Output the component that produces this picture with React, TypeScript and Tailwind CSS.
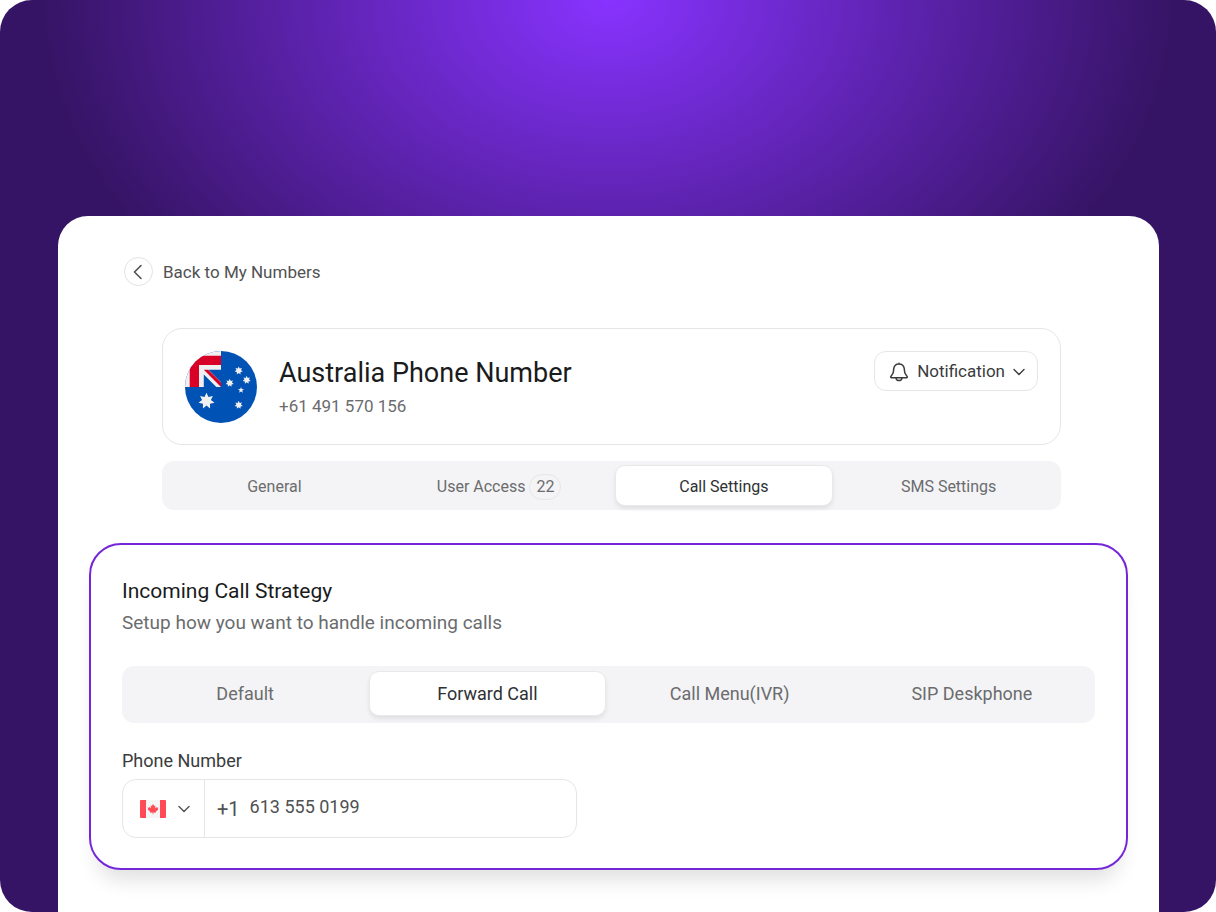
import { useState } from "react"
import clsx from "clsx"

type Tab = { id: string; label: string; count?: number }

const pageTabs: Tab[] = [
  { id: "general", label: "General" },
  { id: "access", label: "User Access", count: 22 },
  { id: "calls", label: "Call Settings" },
  { id: "sms", label: "SMS Settings" },
]

const strategies: Tab[] = [
  { id: "default", label: "Default" },
  { id: "forward", label: "Forward Call" },
  { id: "ivr", label: "Call Menu(IVR)" },
  { id: "sip", label: "SIP Deskphone" },
]

function starPoints(cx: number, cy: number, r: number, tips: number) {
  const inner = tips === 5 ? 0.42 : 0.55
  return Array.from({ length: tips * 2 }, (_, i) => {
    const radius = i % 2 ? r * inner : r
    const angle = (Math.PI * i) / tips - Math.PI / 2
    return `${(cx + radius * Math.cos(angle)).toFixed(2)},${(cy + radius * Math.sin(angle)).toFixed(2)}`
  }).join(" ")
}

function AustraliaFlag() {
  return (
    <svg viewBox="0 0 72 72" className="size-[72px] shrink-0" role="img" aria-label="Australia">
      <clipPath id="au-clip">
        <circle cx="36" cy="36" r="36" />
      </clipPath>
      <g clipPath="url(#au-clip)">
        <path d="M0 0h72v72H0z" fill="#0052b4" />
        <path d="M0 0h36v36H0z" fill="#f0f0f0" />
        <path d="M4.7 4.7H36V14H14v22H4.7z" fill="#d80027" />
        <path d="M23.5 18.8H36V31.3zM18.8 23.5v12.5h12.5z" fill="#0052b4" />
        <path d="M18.8 18.8h4.4L36 31.6V36z" fill="#d80027" />
        <g fill="#f0f0f0">
          <polygon points={starPoints(21.5, 50, 8.2, 7)} />
          <polygon points={starPoints(53.7, 54, 4.2, 7)} />
          <polygon points={starPoints(44.7, 32, 4.2, 7)} />
          <polygon points={starPoints(53.7, 19.6, 4.2, 7)} />
          <polygon points={starPoints(61.7, 29, 4.2, 7)} />
          <polygon points={starPoints(56, 39.2, 3.2, 5)} />
        </g>
      </g>
    </svg>
  )
}

function CanadaFlag() {
  return (
    <svg viewBox="0 0 26 18" className="h-[18px] w-[26px]" aria-hidden="true">
      <rect width="26" height="18" rx="1" fill="#f5f5f5" />
      <path d="M1 0h5v18H1a1 1 0 0 1-1-1V1a1 1 0 0 1 1-1zM20 0h5a1 1 0 0 1 1 1v16a1 1 0 0 1-1 1h-5z" fill="#ff4b55" />
      <path
        d="M13 4l1.2 2.1 1.2-.5-.4 2.6 1.5-1.3.4.8 1.5-.2-.6 1.5.6.6-2.7 2.2.2 1-2.6-.4.1 1.9h-.8l.1-1.9-2.6.4.2-1-2.7-2.2.6-.6-.6-1.5 1.5.2.4-.8 1.5 1.3-.4-2.6 1.2.5z"
        fill="#ff4b55"
      />
    </svg>
  )
}

function ChevronDown() {
  return (
    <svg viewBox="0 0 12 12" className="size-3" fill="none" stroke="currentColor" strokeWidth="1.4" strokeLinecap="round" strokeLinejoin="round" aria-hidden="true">
      <path d="M1 3.5l5 5 5-5" />
    </svg>
  )
}

function BellIcon() {
  return (
    <svg viewBox="0 0 20 20" className="size-5" fill="none" stroke="currentColor" strokeWidth="1.5" strokeLinecap="round" strokeLinejoin="round" aria-hidden="true">
      <path d="M10 1.2v.8M10 2C7.2 2 5 4.1 4.7 6.9l-.3 2.7c-.1.8-.4 1.5-.8 2.2L1.8 14.6c-.3.6 0 1.2.7 1.2h15c.7 0 1-.6.7-1.2l-1.8-2.8c-.4-.7-.7-1.4-.8-2.2l-.3-2.7C15 4.1 12.8 2 10 2z" />
      <path d="M7.1 16.1c.2 1.6 1.3 2.5 2.9 2.5s2.7-.9 2.9-2.5" />
    </svg>
  )
}

function TabBar({ tabs, initial, label, large }: { tabs: Tab[]; initial: string; label: string; large?: boolean }) {
  const [active, setActive] = useState(initial)

  return (
    <div
      role="tablist"
      aria-label={label}
      className={clsx("grid grid-cols-4 gap-1.5 rounded-xl bg-[#f4f4f6]", large ? "px-[5px] pt-[5px] pb-[7px]" : "px-[3px] py-1")}
    >
      {tabs.map((tab) => (
        <button
          key={tab.id}
          type="button"
          role="tab"
          aria-selected={tab.id === active}
          onClick={() => setActive(tab.id)}
          className={clsx(
            "flex cursor-pointer items-center justify-center gap-1 rounded-[10px] border",
            large ? "h-[45px] text-lg" : "h-[41px] pt-0.5 text-base",
            tab.id === active
              ? "border-[#e9e9eb] bg-white text-[#2f3133] shadow-[0_3px_4px_rgba(0,0,0,0.08)]"
              : "border-transparent text-[#6b6c6e]",
          )}
        >
          {tab.label}
          {tab.count !== undefined && (
            <span className="flex h-[26px] items-center rounded-full border border-[#e6e6e8] px-1.5">{tab.count}</span>
          )}
        </button>
      ))}
    </div>
  )
}

export default function App() {
  const [phone, setPhone] = useState("613 555 0199")

  return (
    <div className="flex min-h-screen flex-col rounded-[32px] bg-[#361465] bg-[radial-gradient(565px_410px_at_50%_0,#8833ff_0%,#361465_100%)] pt-[216px] pr-[57px] pl-[58px] font-['Roboto',sans-serif]">
      <main className="flex grow flex-col rounded-t-[30px] bg-white px-[31px] pt-[41px]">
        <a href="#numbers" className="ml-[35px] flex items-center gap-2.5 self-start text-[17px] leading-7 text-[#505153]">
          <span className="flex size-[29px] items-center justify-center rounded-full border border-[#e2e2e4]">
            <svg viewBox="0 0 16 16" className="size-4" fill="none" stroke="currentColor" strokeWidth="1.6" strokeLinecap="round" strokeLinejoin="round" aria-hidden="true">
              <path d="M10 1.5L3.5 8l6.5 6.5" />
            </svg>
          </span>
          Back to My Numbers
        </a>

        <div className="mt-[42px] mr-[67px] ml-[73px] flex flex-col gap-4">
          <header className="flex items-start rounded-[20px] border border-[#e6e6e8] px-[22px] pt-[22px] pb-[21px]">
            <AustraliaFlag />
            <div className="ml-[22px] grow">
              <h1 className="text-[27px] leading-[45px] text-[#1a1b1c]">Australia Phone Number</h1>
              <p className="text-[17px] leading-5 text-[#6b6c6e]">+61 491 570 156</p>
            </div>
            <button type="button" className="flex h-10 cursor-pointer items-center gap-2 rounded-xl border border-[#e6e6e8] pt-px pr-3 pl-3.5 text-[17px] text-[#3a3b3d]">
              <BellIcon />
              Notification
              <ChevronDown />
            </button>
          </header>
          <TabBar tabs={pageTabs} initial="calls" label="Number settings" />
        </div>

        <section className="mt-[33px] rounded-[32px] border-2 border-[#7626d9] bg-white px-[31px] py-[30px] shadow-[0_18px_20px_-8px_rgba(0,0,0,0.12)]">
          <h2 className="text-[21px] leading-8 text-[#1a1b1c]">Incoming Call Strategy</h2>
          <p className="text-[19px] leading-8 text-[#6b6c6e]">Setup how you want to handle incoming calls</p>

          <div className="mt-[27px]">
            <TabBar tabs={strategies} initial="forward" label="Incoming call strategy" large />
          </div>

          <label htmlFor="phone" className="mt-6 block text-lg leading-7 text-[#3a3b3d]">
            Phone Number
          </label>
          <div className="mt-1 flex h-[59px] w-[455px] max-w-full rounded-[14px] border border-[#e6e6e8] text-lg text-[#505153]">
            <div className="relative flex w-[82px] items-center gap-3 border-r border-[#e6e6e8] pl-[17px]">
              <CanadaFlag />
              <ChevronDown />
              <select aria-label="Country" className="absolute inset-0 cursor-pointer opacity-0">
                <option>Canada</option>
                <option>Australia</option>
              </select>
            </div>
            <span className="flex items-center pl-3 text-xl">+1</span>
            <input
              id="phone"
              type="tel"
              value={phone}
              onChange={(e) => setPhone(e.target.value)}
              className="min-w-0 grow px-2.5 pb-1 outline-none"
            />
          </div>
        </section>
      </main>
    </div>
  )
}
